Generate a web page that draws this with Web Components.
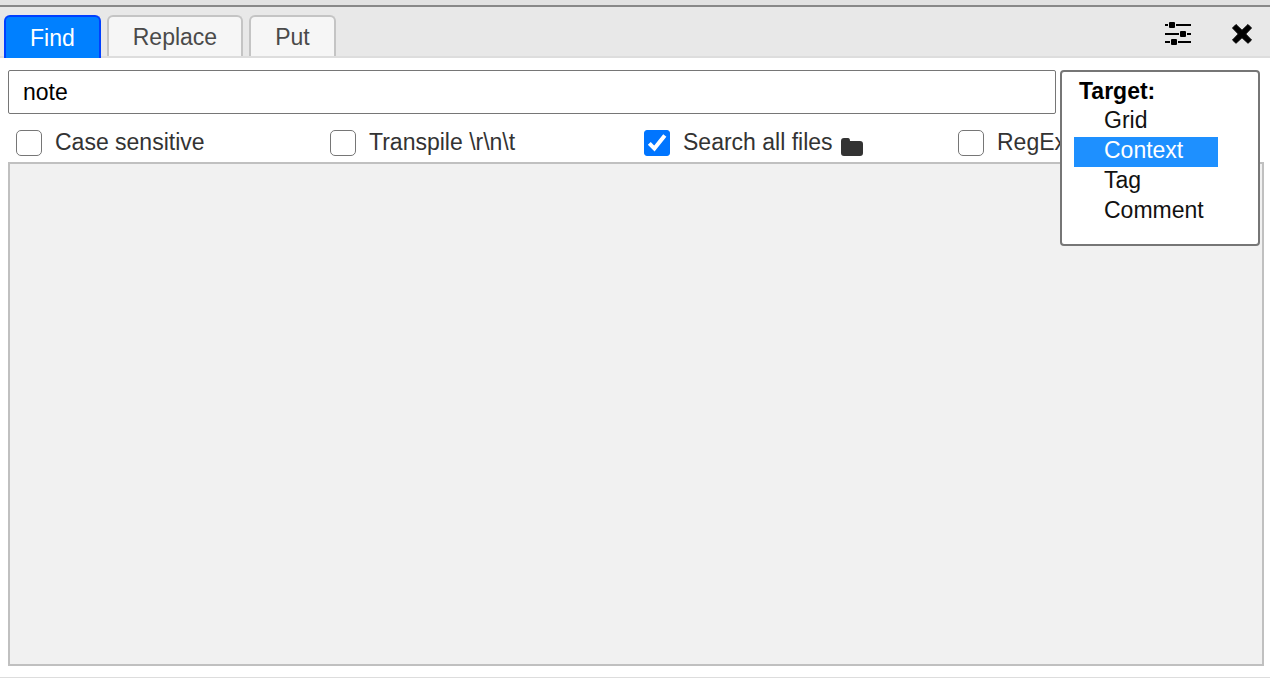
<!DOCTYPE html>
<html lang="en">
<head>
<meta charset="utf-8">
<title>Find</title>
<style>
  html, body { height: 100%; }
  body { margin: 0; background: #fff; font: 23px/30px "Liberation Sans", Arial, sans-serif; color: #333; }
</style>
</head>
<body>
<search-panel></search-panel>

<template id="tab-button">
  <style>
    :host { display: block; }
    button { display: block; box-sizing: border-box; height: 41px; margin: 0; padding: 0 24px; font: inherit; line-height: 40px; color: #4a4a4a; background: #f6f6f6; border: 2px solid #c4c4c4; border-bottom: 0; border-radius: 6px 6px 0 0; cursor: pointer; }
    :host([selected]) button { height: 43px; color: #fff; background: #0080ff; border-color: #0040ff; }
  </style>
  <button type="button" role="tab"><slot></slot></button>
</template>

<template id="icon-button">
  <style>
    :host { display: block; }
    button { display: flex; align-items: center; justify-content: center; width: 32px; height: 32px; padding: 0; border: 0; background: none; color: #000; cursor: pointer; }
  </style>
  <button type="button"><slot></slot></button>
</template>

<template id="check-option">
  <style>
    :host { display: block; min-width: 0; }
    label { display: flex; align-items: center; gap: 13px; height: 30px; white-space: nowrap; }
    input { appearance: none; flex: none; box-sizing: border-box; width: 26px; height: 26px; margin: 2px 0 0; border: 1px solid #767676; border-radius: 5px; background: #fff center / 26px 26px no-repeat; }
    input:checked { border-color: #0075ff; border-radius: 3px; background-color: #0075ff; background-origin: border-box;
      background-image: url("data:image/svg+xml,%3Csvg xmlns='http://www.w3.org/2000/svg' viewBox='0 0 26 26'%3E%3Cpath d='M5.3 13.4L10.4 18.6L20.8 5.4' fill='none' stroke='white' stroke-width='4'/%3E%3C/svg%3E"); }
    .text { display: flex; gap: 8px; }
  </style>
  <label><input type="checkbox"><span class="text"><slot></slot></span></label>
</template>

<template id="target-list">
  <style>
    :host { display: block; }
    select { display: block; box-sizing: border-box; width: 100%; height: 176px; margin: 0; padding: 6px 40px 0 12px; font: inherit; color: #111; background: #fff; border: 2px solid #767676; border-radius: 4px; outline: 0; overflow: hidden; scrollbar-width: none; }
    optgroup { font-weight: 700; color: #000; text-indent: 3px; }
    option { box-sizing: border-box; font-weight: 400; text-indent: 0; min-height: 30px; padding: 0 0 3px 30px; color: #111; }
    option::before { content: none; }
    option:checked { color: #fff; background: #1e90ff linear-gradient(#1e90ff, #1e90ff); }
  </style>
  <select size="5" aria-label="Target">
    <optgroup label="Target:">
      <option>Grid</option>
      <option selected>Context</option>
      <option>Tag</option>
      <option>Comment</option>
    </optgroup>
  </select>
</template>

<template id="search-panel">
  <style>
    :host { display: flex; flex-direction: column; box-sizing: border-box; height: 100vh; border-bottom: 1px solid #ddd; overflow: hidden; }
    header { flex: none; box-sizing: border-box; display: flex; align-items: flex-start; height: 58px; padding: 8px 12px 0 4px; background: #e8e8e8; border-top: 7px solid #888; border-image: linear-gradient(#e2e2e2 5px, #888 5px) 7 0 0; box-shadow: inset 0 -2px #ddd; }
    nav { display: flex; gap: 6px; flex: 1; }
    .tools { display: flex; gap: 32px; padding-top: 2px; }
    main { position: relative; flex: 1; display: flex; flex-direction: column; min-height: 0; padding: 12px 6px 11px 8px; }
    .query { box-sizing: border-box; width: calc(100% - 208px); height: 44px; flex: none; margin: 0; padding: 0 14px; font: inherit; color: #000; background: #fff; border: 1px solid #767676; border-radius: 2px; outline: 0; }
    .options { display: grid; grid-template-columns: repeat(4, minmax(0, 1fr)); margin: 13px 0 5px; }
    check-option { padding-left: 8px; }
    .results { flex: 1; min-height: 0; background: #f1f1f1; border: 2px solid #c0c0c0; }
    target-list { position: absolute; top: 12px; right: 10px; width: 200px; }
    .folder { margin-top: 11px; }
  </style>
  <header>
    <nav role="tablist">
      <tab-button selected>Find</tab-button>
      <tab-button>Replace</tab-button>
      <tab-button>Put</tab-button>
    </nav>
    <div class="tools">
      <icon-button name="Settings">
        <svg width="26" height="26" viewBox="0 0 26 26" aria-hidden="true">
          <path d="M0 5H26M0 14H26M0 22H26" stroke="#000" stroke-width="2"/>
          <path d="M3 5H11M14 14H22M5 22H13" stroke="#e8e8e8" stroke-width="3"/>
          <rect x="4" y="2" width="6" height="6" rx="1"/><rect x="15" y="11" width="6" height="6" rx="1"/><rect x="6" y="19" width="6" height="6" rx="1"/>
        </svg>
      </icon-button>
      <icon-button name="Close">
        <svg width="22" height="22" viewBox="0 0 22 22" aria-hidden="true">
          <path d="M5 2.500L11 8.300L17 2.500L20.500 6L14.700 12L20.500 18L17 21.300L11 15.700L5 21.300L1.500 18L7.300 12L1.500 6Z" stroke="#000" stroke-linejoin="round"/>
        </svg>
      </icon-button>
    </div>
  </header>
  <main>
    <input class="query" type="text" value="note" aria-label="Find">
    <div class="options">
      <check-option>Case sensitive</check-option>
      <check-option>Transpile \r\n\t</check-option>
      <check-option checked>Search all files
        <svg class="folder" width="22" height="18" viewBox="0 0 22 18" aria-hidden="true"><path d="M0 3Q0 0 3 0H7Q9 0 9 3H19Q22 3 22 6V15Q22 18 19 18H3Q0 18 0 15Z" fill="#333"/></svg>
      </check-option>
      <check-option>RegEx</check-option>
    </div>
    <div class="results"></div>
    <target-list></target-list>
  </main>
</template>

<script>
  class TemplateElement extends HTMLElement {
    constructor() {
      super();
      const template = document.getElementById(this.localName);
      this.attachShadow({ mode: "open" }).append(template.content.cloneNode(true));
    }
  }
  customElements.define("tab-button", class extends TemplateElement {
    connectedCallback() {
      this.shadowRoot.querySelector("button").setAttribute("aria-selected", this.hasAttribute("selected"));
    }
  });
  customElements.define("icon-button", class extends TemplateElement {
    connectedCallback() {
      this.shadowRoot.querySelector("button").setAttribute("aria-label", this.getAttribute("name"));
    }
  });
  customElements.define("check-option", class extends TemplateElement {
    connectedCallback() {
      this.shadowRoot.querySelector("input").checked = this.hasAttribute("checked");
    }
  });
  customElements.define("target-list", class extends TemplateElement {});
  customElements.define("search-panel", class extends TemplateElement {});
</script>
</body>
</html>
